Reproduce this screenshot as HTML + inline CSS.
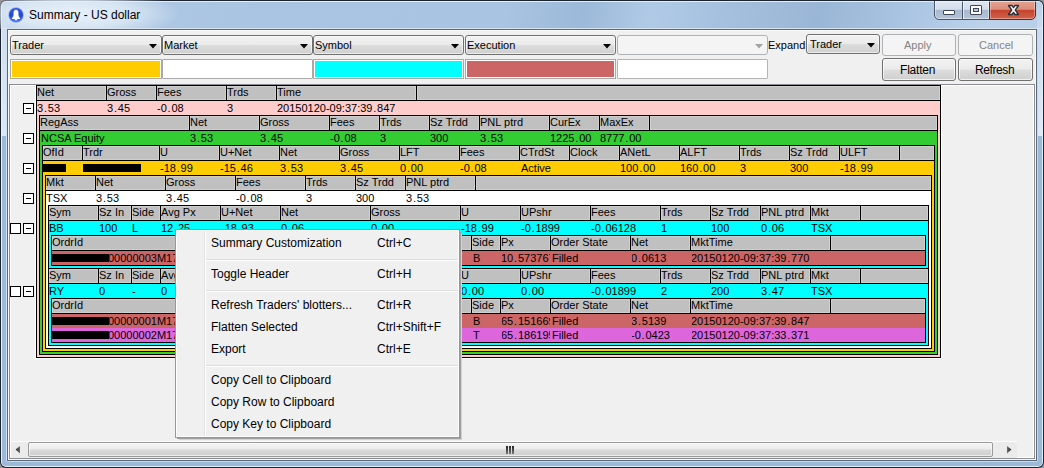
<!DOCTYPE html><html><head><meta charset="utf-8"><style>
html,body{margin:0;padding:0;}
body{width:1044px;height:468px;overflow:hidden;position:relative;background:#959595;font-family:"Liberation Sans",sans-serif;}
body>div,body>span,body>svg,div>span.t{position:absolute;box-sizing:border-box;}
span.p{margin:0 0.8px;}
.t{white-space:pre;line-height:normal;}
.t::before{content:"";}
</style></head><body>
<div style="left:0;top:0;width:1044px;height:468px;border-radius:6px;background:#1c2430;"></div>
<div style="left:1px;top:1px;width:1042px;height:466px;border-radius:5px;background:#e4eef8;"></div>
<div style="left:2px;top:2px;width:1040px;height:464px;border-radius:4px;background:linear-gradient(100deg,#b4cce6 0%,#aac5e2 20%,#a9c4e2 45%,#9cb9d9 52%,#b0cae6 58%,#a6c1df 64%,#9ab6d6 73%,#a8c3e1 80%,#bcd2ea 88%,#b2cae4 100%);"></div>
<div style="left:2px;top:136px;width:1040px;height:330px;border-radius:0 0 4px 4px;background:#9cb9d9;"></div>
<div style="left:0px;top:0px;width:200px;height:29px;background:radial-gradient(ellipse 110px 26px at 70px 14px,rgba(235,243,250,0.95) 0%,rgba(225,236,247,0.8) 55%,rgba(200,220,240,0) 100%);border-radius:6px 0 0 0;"></div>
<div style="left:2px;top:8px;width:5px;height:128px;background:linear-gradient(rgba(207,223,240,0) 0%,#cfdff0 15%,#dde9f5 100%);"></div>
<div style="left:1037px;top:8px;width:5px;height:128px;background:linear-gradient(rgba(200,218,240,0.3) 0%,#c8daf0 15%,#dde9f5 100%);"></div>
<div style="left:6px;top:29px;width:1px;height:432px;background:#d0e0f0;"></div>
<div style="left:1037px;top:29px;width:1px;height:432px;background:#c8daf0;"></div>
<div style="left:2px;top:28px;width:1040px;height:1px;background:#d8e4f0;"></div>
<div style="left:7px;top:461px;width:1030px;height:1px;background:#c8daf0;"></div>
<svg style="left:8px;top:7px" width="16" height="16" viewBox="0 0 16 16">
<defs><linearGradient id="ig" x1="0" y1="0" x2="0" y2="1"><stop offset="0" stop-color="#3a5ae0"/><stop offset="0.5" stop-color="#2446d8"/><stop offset="1" stop-color="#4f7af2"/></linearGradient></defs>
<circle cx="8" cy="8" r="7.7" fill="#8aa6f0"/>
<circle cx="8" cy="8" r="7.0" fill="url(#ig)"/>
<path d="M8 2.7 C6.3 2.7 5.5 4.1 5.5 5.8 L5.5 8.0 C5.5 9.5 4.7 10.3 4.0 10.9 L4.0 11.9 L12.0 11.9 L12.0 10.9 C11.3 10.3 10.5 9.5 10.5 8.0 L10.5 5.8 C10.5 4.1 9.7 2.7 8 2.7 Z" fill="#fff"/>
<ellipse cx="8" cy="12.4" rx="1.3" ry="0.9" fill="#fff"/>
</svg>
<span class="t" style="left:29px;top:8px;font-size:12px;color:#000;">Summary - US dollar</span>
<div style="left:934px;top:-3px;width:56px;height:23px;border:1px solid #4b5668;border-radius:0 0 0 5px;background:linear-gradient(#e2eaf4 0%,#d4deeb 54%,#a8b9cf 58%,#b4c4d8 100%);box-shadow:inset 0 0 0 1px rgba(255,255,255,0.45);"></div>
<div style="left:962px;top:0;width:1px;height:19px;background:#4b5668;"></div>
<div style="left:963px;top:1px;width:1px;height:18px;background:rgba(255,255,255,0.6);"></div>
<div style="left:989px;top:-3px;width:47px;height:23px;border:1px solid #4b3030;border-radius:0 0 5px 0;background:linear-gradient(#eaaa9a 0%,#da8c7a 54%,#c4432c 58%,#d0634c 100%);box-shadow:inset 0 0 0 1px rgba(255,255,255,0.35);"></div>
<div style="left:943px;top:10px;width:12px;height:5px;background:#fff;border:1px solid #3c4658;border-radius:1px;"></div>
<div style="left:970px;top:5px;width:12px;height:10px;background:#fff;border:1px solid #3c4658;border-radius:1px;"></div>
<div style="left:973px;top:8px;width:6px;height:4px;background:#b9cadf;border:1px solid #3c4658;"></div>
<div style="left:934px;top:0px;width:103px;height:1px;background:#1c2430;"></div>
<div style="left:935px;top:1px;width:101px;height:1px;background:rgba(255,255,255,0.55);"></div>
<svg style="left:1007px;top:4px" width="13" height="12" viewBox="0 0 13 12"><path d="M1.5 1.5 L5 1.5 L6.5 3.6 L8 1.5 L11.5 1.5 L8.3 6 L11.5 10.5 L8 10.5 L6.5 8.4 L5 10.5 L1.5 10.5 L4.7 6 Z" fill="#fafafa" stroke="#2a3038" stroke-width="1.3" stroke-linejoin="round"/></svg>
<div style="left:7px;top:29px;width:1030px;height:432px;background:#5a6878;"></div>
<div style="left:8px;top:30px;width:1028px;height:430px;background:#fafafa;"></div>
<div style="left:9px;top:31px;width:1026px;height:428px;background:#f0f0f0;"></div>
<div style="left:10px;top:35px;width:152px;height:20px;border:1px solid #707070;border-radius:3px;background:linear-gradient(#f2f2f2 0%,#ebebeb 48%,#dddddd 52%,#cfcfcf 100%);box-shadow:inset 0 0 0 1px rgba(255,255,255,0.6);"></div>
<span class="t" style="left:12px;top:39px;font-size:11px;color:#000;">Trader</span>
<svg style="left:149px;top:44px" width="8" height="5" viewBox="0 0 8 5"><path d="M0 0 L8 0 L4 4.5 Z" fill="#000"/></svg>
<div style="left:162px;top:35px;width:151px;height:20px;border:1px solid #707070;border-radius:3px;background:linear-gradient(#f2f2f2 0%,#ebebeb 48%,#dddddd 52%,#cfcfcf 100%);box-shadow:inset 0 0 0 1px rgba(255,255,255,0.6);"></div>
<span class="t" style="left:164px;top:39px;font-size:11px;color:#000;">Market</span>
<svg style="left:300px;top:44px" width="8" height="5" viewBox="0 0 8 5"><path d="M0 0 L8 0 L4 4.5 Z" fill="#000"/></svg>
<div style="left:313px;top:35px;width:151px;height:20px;border:1px solid #707070;border-radius:3px;background:linear-gradient(#f2f2f2 0%,#ebebeb 48%,#dddddd 52%,#cfcfcf 100%);box-shadow:inset 0 0 0 1px rgba(255,255,255,0.6);"></div>
<span class="t" style="left:315px;top:39px;font-size:11px;color:#000;">Symbol</span>
<svg style="left:451px;top:44px" width="8" height="5" viewBox="0 0 8 5"><path d="M0 0 L8 0 L4 4.5 Z" fill="#000"/></svg>
<div style="left:465px;top:35px;width:151px;height:20px;border:1px solid #707070;border-radius:3px;background:linear-gradient(#f2f2f2 0%,#ebebeb 48%,#dddddd 52%,#cfcfcf 100%);box-shadow:inset 0 0 0 1px rgba(255,255,255,0.6);"></div>
<span class="t" style="left:467px;top:39px;font-size:11px;color:#000;">Execution</span>
<svg style="left:603px;top:44px" width="8" height="5" viewBox="0 0 8 5"><path d="M0 0 L8 0 L4 4.5 Z" fill="#000"/></svg>
<div style="left:617px;top:35px;width:151px;height:20px;border:1px solid #adb2b5;border-radius:3px;background:#f4f4f4;"></div>
<svg style="left:755px;top:44px" width="8" height="5" viewBox="0 0 8 5"><path d="M0 0 L8 0 L4 4.5 Z" fill="#a3a3a3"/></svg>
<span class="t" style="left:768px;top:39px;font-size:11px;color:#000;">Expand</span>
<div style="left:806px;top:34px;width:74px;height:20px;border:1px solid #707070;border-radius:3px;background:linear-gradient(#f2f2f2 0%,#ebebeb 48%,#dddddd 52%,#cfcfcf 100%);box-shadow:inset 0 0 0 1px rgba(255,255,255,0.6);"></div>
<span class="t" style="left:810px;top:38px;font-size:11px;color:#000;">Trader</span>
<svg style="left:867px;top:43px" width="8" height="5" viewBox="0 0 8 5"><path d="M0 0 L8 0 L4 4.5 Z" fill="#000"/></svg>
<div style="left:10px;top:59px;width:152px;height:20px;background:#ffcc00;"></div>
<div style="left:10px;top:59px;width:152px;height:20px;border:1px solid #a9a9a9;border-radius:1px;"></div>
<div style="left:11px;top:60px;width:150px;height:18px;border:1px solid #ffffff;"></div>
<div style="left:162px;top:59px;width:151px;height:20px;background:#ffffff;"></div>
<div style="left:162px;top:59px;width:151px;height:20px;border:1px solid #a9a9a9;border-radius:1px;"></div>
<div style="left:163px;top:60px;width:149px;height:18px;border:1px solid #ffffff;"></div>
<div style="left:313px;top:59px;width:151px;height:20px;background:#00ffff;"></div>
<div style="left:313px;top:59px;width:151px;height:20px;border:1px solid #a9a9a9;border-radius:1px;"></div>
<div style="left:314px;top:60px;width:149px;height:18px;border:1px solid #ffffff;"></div>
<div style="left:465px;top:59px;width:151px;height:20px;background:#cc6666;"></div>
<div style="left:465px;top:59px;width:151px;height:20px;border:1px solid #a9a9a9;border-radius:1px;"></div>
<div style="left:466px;top:60px;width:149px;height:18px;border:1px solid #ffffff;"></div>
<div style="left:617px;top:59px;width:151px;height:20px;background:#ffffff;"></div>
<div style="left:617px;top:59px;width:151px;height:20px;border:1px solid #b4b4b4;border-radius:1px;"></div>
<div style="left:618px;top:60px;width:149px;height:18px;border:1px solid #ffffff;"></div>
<div style="left:882px;top:34px;width:74px;height:22px;border:1px solid #adb2b5;border-radius:3px;background:#f4f4f4;"></div>
<span class="t" style="left:904px;top:39px;font-size:11px;color:#838383;letter-spacing:0px;">Apply</span>
<div style="left:958px;top:34px;width:75px;height:22px;border:1px solid #adb2b5;border-radius:3px;background:#f4f4f4;"></div>
<span class="t" style="left:979px;top:39px;font-size:11px;color:#838383;letter-spacing:0px;">Cancel</span>
<div style="left:882px;top:58px;width:74px;height:23px;border:1px solid #707070;border-radius:3px;background:linear-gradient(#f2f2f2 0%,#ebebeb 48%,#dddddd 52%,#cfcfcf 100%);box-shadow:inset 0 0 0 1px rgba(255,255,255,0.7);"></div>
<span class="t" style="left:900px;top:63px;font-size:12px;color:#000;letter-spacing:-0.2px;">Flatten</span>
<div style="left:958px;top:58px;width:75px;height:23px;border:1px solid #707070;border-radius:3px;background:linear-gradient(#f2f2f2 0%,#ebebeb 48%,#dddddd 52%,#cfcfcf 100%);box-shadow:inset 0 0 0 1px rgba(255,255,255,0.7);"></div>
<span class="t" style="left:975px;top:63px;font-size:12px;color:#000;letter-spacing:-0.4px;">Refresh</span>
<div style="left:9px;top:84px;width:1026px;height:375px;background:#8a8d94;"></div>
<div style="left:10px;top:85px;width:1024px;height:373px;background:#ffffff;"></div>
<div style="left:11px;top:86px;width:1022px;height:371px;background:#f0f0f0;"></div>
<div style="left:35px;top:85px;width:1px;height:274px;background:#ffffff;"></div>
<div style="left:941px;top:85px;width:1px;height:274px;background:#ffffff;"></div>
<div style="left:35px;top:358px;width:907px;height:1px;background:#ffffff;"></div>
<div style="left:36px;top:85px;width:905px;height:273px;background:#000;"></div>
<div style="left:37px;top:86px;width:903px;height:271px;background:#ffcccc;"></div>
<div style="left:37px;top:86px;width:903px;height:14px;background:#000;"></div>
<div style="left:37px;top:100px;width:903px;height:1px;background:#000;"></div>
<div style="left:37px;top:86px;width:69px;height:14px;background:#c0c0c0;border:1px solid #cfcfcf;"></div>
<div style="left:107px;top:86px;width:49px;height:14px;background:#c0c0c0;border:1px solid #cfcfcf;"></div>
<div style="left:157px;top:86px;width:69px;height:14px;background:#c0c0c0;border:1px solid #cfcfcf;"></div>
<div style="left:227px;top:86px;width:49px;height:14px;background:#c0c0c0;border:1px solid #cfcfcf;"></div>
<div style="left:277px;top:86px;width:139px;height:14px;background:#c0c0c0;border:1px solid #cfcfcf;"></div>
<div style="left:417px;top:86px;width:523px;height:14px;background:#c0c0c0;border:1px solid #cfcfcf;"></div>
<span class="t" style="left:37px;top:86px;font-size:11px;color:#000;">Net</span>
<span class="t" style="left:107px;top:86px;font-size:11px;color:#000;">Gross</span>
<span class="t" style="left:157px;top:86px;font-size:11px;color:#000;">Fees</span>
<span class="t" style="left:227px;top:86px;font-size:11px;color:#000;">Trds</span>
<span class="t" style="left:277px;top:86px;font-size:11px;color:#000;">Time</span>
<span class="t" style="left:37px;top:102px;font-size:11px;color:#000;">3<span class="p">.</span>53</span>
<span class="t" style="left:107px;top:102px;font-size:11px;color:#000;">3<span class="p">.</span>45</span>
<span class="t" style="left:157px;top:102px;font-size:11px;color:#000;">-0<span class="p">.</span>08</span>
<span class="t" style="left:227px;top:102px;font-size:11px;color:#000;">3</span>
<span class="t" style="left:277px;top:102px;font-size:11px;color:#000;">20150120-09:37:39<span class="p">.</span>847</span>
<div style="left:39px;top:115px;width:899px;height:240px;background:#000;"></div>
<div style="left:40px;top:116px;width:897px;height:238px;background:#33cc33;"></div>
<div style="left:40px;top:116px;width:897px;height:14px;background:#000;"></div>
<div style="left:40px;top:130px;width:897px;height:1px;background:#000;"></div>
<div style="left:40px;top:116px;width:149px;height:14px;background:#c0c0c0;border:1px solid #cfcfcf;"></div>
<div style="left:190px;top:116px;width:69px;height:14px;background:#c0c0c0;border:1px solid #cfcfcf;"></div>
<div style="left:260px;top:116px;width:69px;height:14px;background:#c0c0c0;border:1px solid #cfcfcf;"></div>
<div style="left:330px;top:116px;width:49px;height:14px;background:#c0c0c0;border:1px solid #cfcfcf;"></div>
<div style="left:380px;top:116px;width:49px;height:14px;background:#c0c0c0;border:1px solid #cfcfcf;"></div>
<div style="left:430px;top:116px;width:49px;height:14px;background:#c0c0c0;border:1px solid #cfcfcf;"></div>
<div style="left:480px;top:116px;width:69px;height:14px;background:#c0c0c0;border:1px solid #cfcfcf;"></div>
<div style="left:550px;top:116px;width:49px;height:14px;background:#c0c0c0;border:1px solid #cfcfcf;"></div>
<div style="left:600px;top:116px;width:49px;height:14px;background:#c0c0c0;border:1px solid #cfcfcf;"></div>
<div style="left:650px;top:116px;width:287px;height:14px;background:#c0c0c0;border:1px solid #cfcfcf;"></div>
<span class="t" style="left:40px;top:116px;font-size:11px;color:#000;">RegAss</span>
<span class="t" style="left:190px;top:116px;font-size:11px;color:#000;">Net</span>
<span class="t" style="left:260px;top:116px;font-size:11px;color:#000;">Gross</span>
<span class="t" style="left:330px;top:116px;font-size:11px;color:#000;">Fees</span>
<span class="t" style="left:380px;top:116px;font-size:11px;color:#000;">Trds</span>
<span class="t" style="left:430px;top:116px;font-size:11px;color:#000;">Sz Trdd</span>
<span class="t" style="left:480px;top:116px;font-size:11px;color:#000;">PNL ptrd</span>
<span class="t" style="left:550px;top:116px;font-size:11px;color:#000;">CurEx</span>
<span class="t" style="left:600px;top:116px;font-size:11px;color:#000;">MaxEx</span>
<span class="t" style="left:41px;top:132px;font-size:11px;color:#000;">NCSA Equity</span>
<span class="t" style="left:190px;top:132px;font-size:11px;color:#000;">3<span class="p">.</span>53</span>
<span class="t" style="left:260px;top:132px;font-size:11px;color:#000;">3<span class="p">.</span>45</span>
<span class="t" style="left:330px;top:132px;font-size:11px;color:#000;">-0<span class="p">.</span>08</span>
<span class="t" style="left:380px;top:132px;font-size:11px;color:#000;">3</span>
<span class="t" style="left:430px;top:132px;font-size:11px;color:#000;">300</span>
<span class="t" style="left:480px;top:132px;font-size:11px;color:#000;">3<span class="p">.</span>53</span>
<span class="t" style="left:550px;top:132px;font-size:11px;color:#000;">1225<span class="p">.</span>00</span>
<span class="t" style="left:600px;top:132px;font-size:11px;color:#000;">8777<span class="p">.</span>00</span>
<div style="left:42px;top:145px;width:893px;height:207px;background:#000;"></div>
<div style="left:43px;top:146px;width:891px;height:205px;background:#ffcc00;"></div>
<div style="left:43px;top:146px;width:891px;height:14px;background:#000;"></div>
<div style="left:43px;top:160px;width:891px;height:1px;background:#000;"></div>
<div style="left:43px;top:146px;width:39px;height:14px;background:#c0c0c0;border:1px solid #cfcfcf;"></div>
<div style="left:83px;top:146px;width:76px;height:14px;background:#c0c0c0;border:1px solid #cfcfcf;"></div>
<div style="left:160px;top:146px;width:59px;height:14px;background:#c0c0c0;border:1px solid #cfcfcf;"></div>
<div style="left:220px;top:146px;width:59px;height:14px;background:#c0c0c0;border:1px solid #cfcfcf;"></div>
<div style="left:280px;top:146px;width:59px;height:14px;background:#c0c0c0;border:1px solid #cfcfcf;"></div>
<div style="left:340px;top:146px;width:59px;height:14px;background:#c0c0c0;border:1px solid #cfcfcf;"></div>
<div style="left:400px;top:146px;width:59px;height:14px;background:#c0c0c0;border:1px solid #cfcfcf;"></div>
<div style="left:460px;top:146px;width:59px;height:14px;background:#c0c0c0;border:1px solid #cfcfcf;"></div>
<div style="left:520px;top:146px;width:49px;height:14px;background:#c0c0c0;border:1px solid #cfcfcf;"></div>
<div style="left:570px;top:146px;width:49px;height:14px;background:#c0c0c0;border:1px solid #cfcfcf;"></div>
<div style="left:620px;top:146px;width:59px;height:14px;background:#c0c0c0;border:1px solid #cfcfcf;"></div>
<div style="left:680px;top:146px;width:59px;height:14px;background:#c0c0c0;border:1px solid #cfcfcf;"></div>
<div style="left:740px;top:146px;width:49px;height:14px;background:#c0c0c0;border:1px solid #cfcfcf;"></div>
<div style="left:790px;top:146px;width:49px;height:14px;background:#c0c0c0;border:1px solid #cfcfcf;"></div>
<div style="left:840px;top:146px;width:59px;height:14px;background:#c0c0c0;border:1px solid #cfcfcf;"></div>
<div style="left:900px;top:146px;width:34px;height:14px;background:#c0c0c0;border:1px solid #cfcfcf;"></div>
<span class="t" style="left:43px;top:146px;font-size:11px;color:#000;">OfId</span>
<span class="t" style="left:83px;top:146px;font-size:11px;color:#000;">Trdr</span>
<span class="t" style="left:160px;top:146px;font-size:11px;color:#000;">U</span>
<span class="t" style="left:220px;top:146px;font-size:11px;color:#000;">U+Net</span>
<span class="t" style="left:280px;top:146px;font-size:11px;color:#000;">Net</span>
<span class="t" style="left:340px;top:146px;font-size:11px;color:#000;">Gross</span>
<span class="t" style="left:400px;top:146px;font-size:11px;color:#000;">LFT</span>
<span class="t" style="left:460px;top:146px;font-size:11px;color:#000;">Fees</span>
<span class="t" style="left:520px;top:146px;font-size:11px;color:#000;">CTrdSt</span>
<span class="t" style="left:570px;top:146px;font-size:11px;color:#000;">Clock</span>
<span class="t" style="left:620px;top:146px;font-size:11px;color:#000;">ANetL</span>
<span class="t" style="left:680px;top:146px;font-size:11px;color:#000;">ALFT</span>
<span class="t" style="left:740px;top:146px;font-size:11px;color:#000;">Trds</span>
<span class="t" style="left:790px;top:146px;font-size:11px;color:#000;">Sz Trdd</span>
<span class="t" style="left:840px;top:146px;font-size:11px;color:#000;">ULFT</span>
<div style="left:43px;top:164px;width:23px;height:8px;background:#000;"></div>
<div style="left:83px;top:164px;width:58px;height:8px;background:#000;"></div>
<span class="t" style="left:160px;top:162px;font-size:11px;color:#000;">-18<span class="p">.</span>99</span>
<span class="t" style="left:220px;top:162px;font-size:11px;color:#000;">-15<span class="p">.</span>46</span>
<span class="t" style="left:280px;top:162px;font-size:11px;color:#000;">3<span class="p">.</span>53</span>
<span class="t" style="left:340px;top:162px;font-size:11px;color:#000;">3<span class="p">.</span>45</span>
<span class="t" style="left:400px;top:162px;font-size:11px;color:#000;">0<span class="p">.</span>00</span>
<span class="t" style="left:460px;top:162px;font-size:11px;color:#000;">-0<span class="p">.</span>08</span>
<span class="t" style="left:521px;top:162px;font-size:11px;color:#000;">Active</span>
<span class="t" style="left:620px;top:162px;font-size:11px;color:#000;">100<span class="p">.</span>00</span>
<span class="t" style="left:680px;top:162px;font-size:11px;color:#000;">160<span class="p">.</span>00</span>
<span class="t" style="left:740px;top:162px;font-size:11px;color:#000;">3</span>
<span class="t" style="left:790px;top:162px;font-size:11px;color:#000;">300</span>
<span class="t" style="left:840px;top:162px;font-size:11px;color:#000;">-18<span class="p">.</span>99</span>
<div style="left:45px;top:175px;width:887px;height:174px;background:#000;"></div>
<div style="left:46px;top:176px;width:885px;height:172px;background:#ffffff;"></div>
<div style="left:46px;top:176px;width:885px;height:14px;background:#000;"></div>
<div style="left:46px;top:190px;width:885px;height:1px;background:#000;"></div>
<div style="left:46px;top:176px;width:49px;height:14px;background:#c0c0c0;border:1px solid #cfcfcf;"></div>
<div style="left:96px;top:176px;width:69px;height:14px;background:#c0c0c0;border:1px solid #cfcfcf;"></div>
<div style="left:166px;top:176px;width:69px;height:14px;background:#c0c0c0;border:1px solid #cfcfcf;"></div>
<div style="left:236px;top:176px;width:69px;height:14px;background:#c0c0c0;border:1px solid #cfcfcf;"></div>
<div style="left:306px;top:176px;width:49px;height:14px;background:#c0c0c0;border:1px solid #cfcfcf;"></div>
<div style="left:356px;top:176px;width:49px;height:14px;background:#c0c0c0;border:1px solid #cfcfcf;"></div>
<div style="left:406px;top:176px;width:69px;height:14px;background:#c0c0c0;border:1px solid #cfcfcf;"></div>
<div style="left:476px;top:176px;width:455px;height:14px;background:#c0c0c0;border:1px solid #cfcfcf;"></div>
<span class="t" style="left:46px;top:176px;font-size:11px;color:#000;">Mkt</span>
<span class="t" style="left:96px;top:176px;font-size:11px;color:#000;">Net</span>
<span class="t" style="left:166px;top:176px;font-size:11px;color:#000;">Gross</span>
<span class="t" style="left:236px;top:176px;font-size:11px;color:#000;">Fees</span>
<span class="t" style="left:306px;top:176px;font-size:11px;color:#000;">Trds</span>
<span class="t" style="left:356px;top:176px;font-size:11px;color:#000;">Sz Trdd</span>
<span class="t" style="left:406px;top:176px;font-size:11px;color:#000;">PNL ptrd</span>
<span class="t" style="left:46px;top:192px;font-size:11px;color:#000;">TSX</span>
<span class="t" style="left:96px;top:192px;font-size:11px;color:#000;">3<span class="p">.</span>53</span>
<span class="t" style="left:166px;top:192px;font-size:11px;color:#000;">3<span class="p">.</span>45</span>
<span class="t" style="left:236px;top:192px;font-size:11px;color:#000;">-0<span class="p">.</span>08</span>
<span class="t" style="left:306px;top:192px;font-size:11px;color:#000;">3</span>
<span class="t" style="left:356px;top:192px;font-size:11px;color:#000;">300</span>
<span class="t" style="left:406px;top:192px;font-size:11px;color:#000;">3<span class="p">.</span>53</span>
<div style="left:48px;top:205px;width:881px;height:141px;background:#000;"></div>
<div style="left:49px;top:206px;width:879px;height:139px;background:#00ffff;"></div>
<div style="left:49px;top:206px;width:879px;height:14px;background:#000;"></div>
<div style="left:49px;top:220px;width:879px;height:1px;background:#000;"></div>
<div style="left:49px;top:206px;width:49px;height:14px;background:#c0c0c0;border:1px solid #cfcfcf;"></div>
<div style="left:99px;top:206px;width:32px;height:14px;background:#c0c0c0;border:1px solid #cfcfcf;"></div>
<div style="left:132px;top:206px;width:28px;height:14px;background:#c0c0c0;border:1px solid #cfcfcf;"></div>
<div style="left:161px;top:206px;width:59px;height:14px;background:#c0c0c0;border:1px solid #cfcfcf;"></div>
<div style="left:221px;top:206px;width:59px;height:14px;background:#c0c0c0;border:1px solid #cfcfcf;"></div>
<div style="left:281px;top:206px;width:89px;height:14px;background:#c0c0c0;border:1px solid #cfcfcf;"></div>
<div style="left:371px;top:206px;width:89px;height:14px;background:#c0c0c0;border:1px solid #cfcfcf;"></div>
<div style="left:461px;top:206px;width:59px;height:14px;background:#c0c0c0;border:1px solid #cfcfcf;"></div>
<div style="left:521px;top:206px;width:69px;height:14px;background:#c0c0c0;border:1px solid #cfcfcf;"></div>
<div style="left:591px;top:206px;width:69px;height:14px;background:#c0c0c0;border:1px solid #cfcfcf;"></div>
<div style="left:661px;top:206px;width:49px;height:14px;background:#c0c0c0;border:1px solid #cfcfcf;"></div>
<div style="left:711px;top:206px;width:49px;height:14px;background:#c0c0c0;border:1px solid #cfcfcf;"></div>
<div style="left:761px;top:206px;width:49px;height:14px;background:#c0c0c0;border:1px solid #cfcfcf;"></div>
<div style="left:811px;top:206px;width:49px;height:14px;background:#c0c0c0;border:1px solid #cfcfcf;"></div>
<div style="left:861px;top:206px;width:67px;height:14px;background:#c0c0c0;border:1px solid #cfcfcf;"></div>
<span class="t" style="left:49px;top:206px;font-size:11px;color:#000;">Sym</span>
<span class="t" style="left:99px;top:206px;font-size:11px;color:#000;">Sz In</span>
<span class="t" style="left:132px;top:206px;font-size:11px;color:#000;">Side</span>
<span class="t" style="left:161px;top:206px;font-size:11px;color:#000;">Avg Px</span>
<span class="t" style="left:221px;top:206px;font-size:11px;color:#000;">U+Net</span>
<span class="t" style="left:281px;top:206px;font-size:11px;color:#000;">Net</span>
<span class="t" style="left:371px;top:206px;font-size:11px;color:#000;">Gross</span>
<span class="t" style="left:461px;top:206px;font-size:11px;color:#000;">U</span>
<span class="t" style="left:521px;top:206px;font-size:11px;color:#000;">UPshr</span>
<span class="t" style="left:591px;top:206px;font-size:11px;color:#000;">Fees</span>
<span class="t" style="left:661px;top:206px;font-size:11px;color:#000;">Trds</span>
<span class="t" style="left:711px;top:206px;font-size:11px;color:#000;">Sz Trdd</span>
<span class="t" style="left:761px;top:206px;font-size:11px;color:#000;">PNL ptrd</span>
<span class="t" style="left:811px;top:206px;font-size:11px;color:#000;">Mkt</span>
<span class="t" style="left:49px;top:222px;font-size:11px;color:#000;">BB</span>
<span class="t" style="left:99px;top:222px;font-size:11px;color:#000;">100</span>
<span class="t" style="left:132px;top:222px;font-size:11px;color:#000;">L</span>
<span class="t" style="left:161px;top:222px;font-size:11px;color:#000;">12<span class="p">.</span>25</span>
<span class="t" style="left:221px;top:222px;font-size:11px;color:#000;">-18<span class="p">.</span>93</span>
<span class="t" style="left:281px;top:222px;font-size:11px;color:#000;">0<span class="p">.</span>06</span>
<span class="t" style="left:371px;top:222px;font-size:11px;color:#000;">0<span class="p">.</span>00</span>
<span class="t" style="left:461px;top:222px;font-size:11px;color:#000;">-18<span class="p">.</span>99</span>
<span class="t" style="left:521px;top:222px;font-size:11px;color:#000;">-0<span class="p">.</span>1899</span>
<span class="t" style="left:591px;top:222px;font-size:11px;color:#000;">-0<span class="p">.</span>06128</span>
<span class="t" style="left:661px;top:222px;font-size:11px;color:#000;">1</span>
<span class="t" style="left:711px;top:222px;font-size:11px;color:#000;">100</span>
<span class="t" style="left:761px;top:222px;font-size:11px;color:#000;">0<span class="p">.</span>06</span>
<span class="t" style="left:811px;top:222px;font-size:11px;color:#000;">TSX</span>
<div style="left:49px;top:268px;width:879px;height:1px;background:#000;"></div>
<div style="left:49px;top:269px;width:879px;height:14px;background:#000;"></div>
<div style="left:49px;top:283px;width:879px;height:1px;background:#000;"></div>
<div style="left:49px;top:269px;width:49px;height:14px;background:#c0c0c0;border:1px solid #cfcfcf;"></div>
<div style="left:99px;top:269px;width:32px;height:14px;background:#c0c0c0;border:1px solid #cfcfcf;"></div>
<div style="left:132px;top:269px;width:28px;height:14px;background:#c0c0c0;border:1px solid #cfcfcf;"></div>
<div style="left:161px;top:269px;width:59px;height:14px;background:#c0c0c0;border:1px solid #cfcfcf;"></div>
<div style="left:221px;top:269px;width:59px;height:14px;background:#c0c0c0;border:1px solid #cfcfcf;"></div>
<div style="left:281px;top:269px;width:89px;height:14px;background:#c0c0c0;border:1px solid #cfcfcf;"></div>
<div style="left:371px;top:269px;width:89px;height:14px;background:#c0c0c0;border:1px solid #cfcfcf;"></div>
<div style="left:461px;top:269px;width:59px;height:14px;background:#c0c0c0;border:1px solid #cfcfcf;"></div>
<div style="left:521px;top:269px;width:69px;height:14px;background:#c0c0c0;border:1px solid #cfcfcf;"></div>
<div style="left:591px;top:269px;width:69px;height:14px;background:#c0c0c0;border:1px solid #cfcfcf;"></div>
<div style="left:661px;top:269px;width:49px;height:14px;background:#c0c0c0;border:1px solid #cfcfcf;"></div>
<div style="left:711px;top:269px;width:49px;height:14px;background:#c0c0c0;border:1px solid #cfcfcf;"></div>
<div style="left:761px;top:269px;width:49px;height:14px;background:#c0c0c0;border:1px solid #cfcfcf;"></div>
<div style="left:811px;top:269px;width:49px;height:14px;background:#c0c0c0;border:1px solid #cfcfcf;"></div>
<div style="left:861px;top:269px;width:67px;height:14px;background:#c0c0c0;border:1px solid #cfcfcf;"></div>
<span class="t" style="left:49px;top:269px;font-size:11px;color:#000;">Sym</span>
<span class="t" style="left:99px;top:269px;font-size:11px;color:#000;">Sz In</span>
<span class="t" style="left:132px;top:269px;font-size:11px;color:#000;">Side</span>
<span class="t" style="left:161px;top:269px;font-size:11px;color:#000;">Avg Px</span>
<span class="t" style="left:221px;top:269px;font-size:11px;color:#000;">U+Net</span>
<span class="t" style="left:281px;top:269px;font-size:11px;color:#000;">Net</span>
<span class="t" style="left:371px;top:269px;font-size:11px;color:#000;">Gross</span>
<span class="t" style="left:461px;top:269px;font-size:11px;color:#000;">U</span>
<span class="t" style="left:521px;top:269px;font-size:11px;color:#000;">UPshr</span>
<span class="t" style="left:591px;top:269px;font-size:11px;color:#000;">Fees</span>
<span class="t" style="left:661px;top:269px;font-size:11px;color:#000;">Trds</span>
<span class="t" style="left:711px;top:269px;font-size:11px;color:#000;">Sz Trdd</span>
<span class="t" style="left:761px;top:269px;font-size:11px;color:#000;">PNL ptrd</span>
<span class="t" style="left:811px;top:269px;font-size:11px;color:#000;">Mkt</span>
<span class="t" style="left:49px;top:285px;font-size:11px;color:#000;">RY</span>
<span class="t" style="left:99px;top:285px;font-size:11px;color:#000;">0</span>
<span class="t" style="left:132px;top:285px;font-size:11px;color:#000;">-</span>
<span class="t" style="left:161px;top:285px;font-size:11px;color:#000;">0</span>
<span class="t" style="left:221px;top:285px;font-size:11px;color:#000;">0<span class="p">.</span>00</span>
<span class="t" style="left:281px;top:285px;font-size:11px;color:#000;">0<span class="p">.</span>00</span>
<span class="t" style="left:371px;top:285px;font-size:11px;color:#000;">0<span class="p">.</span>00</span>
<span class="t" style="left:461px;top:285px;font-size:11px;color:#000;">0<span class="p">.</span>00</span>
<span class="t" style="left:521px;top:285px;font-size:11px;color:#000;">0<span class="p">.</span>00</span>
<span class="t" style="left:591px;top:285px;font-size:11px;color:#000;">-0<span class="p">.</span>01899</span>
<span class="t" style="left:661px;top:285px;font-size:11px;color:#000;">2</span>
<span class="t" style="left:711px;top:285px;font-size:11px;color:#000;">200</span>
<span class="t" style="left:761px;top:285px;font-size:11px;color:#000;">3<span class="p">.</span>47</span>
<span class="t" style="left:811px;top:285px;font-size:11px;color:#000;">TSX</span>
<div style="left:51px;top:235px;width:875px;height:31px;background:#000;"></div>
<div style="left:52px;top:236px;width:873px;height:29px;background:#cc6666;"></div>
<div style="left:52px;top:236px;width:873px;height:14px;background:#000;"></div>
<div style="left:52px;top:250px;width:873px;height:1px;background:#000;"></div>
<div style="left:52px;top:236px;width:419px;height:14px;background:#c0c0c0;border:1px solid #cfcfcf;"></div>
<div style="left:472px;top:236px;width:28px;height:14px;background:#c0c0c0;border:1px solid #cfcfcf;"></div>
<div style="left:501px;top:236px;width:49px;height:14px;background:#c0c0c0;border:1px solid #cfcfcf;"></div>
<div style="left:551px;top:236px;width:79px;height:14px;background:#c0c0c0;border:1px solid #cfcfcf;"></div>
<div style="left:631px;top:236px;width:59px;height:14px;background:#c0c0c0;border:1px solid #cfcfcf;"></div>
<div style="left:691px;top:236px;width:139px;height:14px;background:#c0c0c0;border:1px solid #cfcfcf;"></div>
<div style="left:831px;top:236px;width:94px;height:14px;background:#c0c0c0;border:1px solid #cfcfcf;"></div>
<span class="t" style="left:52px;top:236px;font-size:11px;color:#000;">OrdrId</span>
<span class="t" style="left:472px;top:236px;font-size:11px;color:#000;">Side</span>
<span class="t" style="left:501px;top:236px;font-size:11px;color:#000;">Px</span>
<span class="t" style="left:551px;top:236px;font-size:11px;color:#000;">Order State</span>
<span class="t" style="left:631px;top:236px;font-size:11px;color:#000;">Net</span>
<span class="t" style="left:691px;top:236px;font-size:11px;color:#000;">MktTime</span>
<div style="left:52px;top:254px;width:57px;height:8px;background:#000;"></div>
<div style="left:109px;top:251px;width:362px;height:14px;overflow:hidden;"><span class="t" style="left:-1px;top:1px;font-size:11px;color:#000;">00000003M1757</span></div>
<div style="left:473px;top:251px;width:27px;height:14px;overflow:hidden;"><span class="t" style="left:0px;top:1px;font-size:11px;color:#000;">B</span></div>
<div style="left:502px;top:251px;width:48px;height:14px;overflow:hidden;"><span class="t" style="left:-1px;top:1px;font-size:11px;color:#000;">10<span class="p">.</span>573767</span></div>
<div style="left:552px;top:251px;width:78px;height:14px;overflow:hidden;"><span class="t" style="left:0px;top:1px;font-size:11px;color:#000;">Filled</span></div>
<div style="left:632px;top:251px;width:58px;height:14px;overflow:hidden;"><span class="t" style="left:-1px;top:1px;font-size:11px;color:#000;">0<span class="p">.</span>0613</span></div>
<div style="left:692px;top:251px;width:138px;height:14px;overflow:hidden;"><span class="t" style="left:-1px;top:1px;font-size:11px;color:#000;">20150120-09:37:39<span class="p">.</span>770</span></div>
<div style="left:51px;top:298px;width:875px;height:45px;background:#000;"></div>
<div style="left:52px;top:299px;width:873px;height:43px;background:#cc6666;"></div>
<div style="left:52px;top:299px;width:873px;height:14px;background:#000;"></div>
<div style="left:52px;top:313px;width:873px;height:1px;background:#000;"></div>
<div style="left:52px;top:299px;width:419px;height:14px;background:#c0c0c0;border:1px solid #cfcfcf;"></div>
<div style="left:472px;top:299px;width:28px;height:14px;background:#c0c0c0;border:1px solid #cfcfcf;"></div>
<div style="left:501px;top:299px;width:49px;height:14px;background:#c0c0c0;border:1px solid #cfcfcf;"></div>
<div style="left:551px;top:299px;width:79px;height:14px;background:#c0c0c0;border:1px solid #cfcfcf;"></div>
<div style="left:631px;top:299px;width:59px;height:14px;background:#c0c0c0;border:1px solid #cfcfcf;"></div>
<div style="left:691px;top:299px;width:139px;height:14px;background:#c0c0c0;border:1px solid #cfcfcf;"></div>
<div style="left:831px;top:299px;width:94px;height:14px;background:#c0c0c0;border:1px solid #cfcfcf;"></div>
<span class="t" style="left:52px;top:299px;font-size:11px;color:#000;">OrdrId</span>
<span class="t" style="left:472px;top:299px;font-size:11px;color:#000;">Side</span>
<span class="t" style="left:501px;top:299px;font-size:11px;color:#000;">Px</span>
<span class="t" style="left:551px;top:299px;font-size:11px;color:#000;">Order State</span>
<span class="t" style="left:631px;top:299px;font-size:11px;color:#000;">Net</span>
<span class="t" style="left:691px;top:299px;font-size:11px;color:#000;">MktTime</span>
<div style="left:52px;top:328px;width:873px;height:14px;background:#dd66dd;"></div>
<div style="left:52px;top:317px;width:57px;height:8px;background:#000;"></div>
<div style="left:52px;top:331px;width:57px;height:8px;background:#000;"></div>
<div style="left:109px;top:314px;width:362px;height:14px;overflow:hidden;"><span class="t" style="left:-1px;top:1px;font-size:11px;color:#000;">00000001M1757</span></div>
<div style="left:473px;top:314px;width:27px;height:14px;overflow:hidden;"><span class="t" style="left:0px;top:1px;font-size:11px;color:#000;">B</span></div>
<div style="left:502px;top:314px;width:48px;height:14px;overflow:hidden;"><span class="t" style="left:-1px;top:1px;font-size:11px;color:#000;">65<span class="p">.</span>151669</span></div>
<div style="left:552px;top:314px;width:78px;height:14px;overflow:hidden;"><span class="t" style="left:0px;top:1px;font-size:11px;color:#000;">Filled</span></div>
<div style="left:632px;top:314px;width:58px;height:14px;overflow:hidden;"><span class="t" style="left:-1px;top:1px;font-size:11px;color:#000;">3<span class="p">.</span>5139</span></div>
<div style="left:692px;top:314px;width:138px;height:14px;overflow:hidden;"><span class="t" style="left:-1px;top:1px;font-size:11px;color:#000;">20150120-09:37:39<span class="p">.</span>847</span></div>
<div style="left:109px;top:328px;width:362px;height:14px;overflow:hidden;"><span class="t" style="left:-1px;top:1px;font-size:11px;color:#000;">00000002M1757</span></div>
<div style="left:473px;top:328px;width:27px;height:14px;overflow:hidden;"><span class="t" style="left:0px;top:1px;font-size:11px;color:#000;">T</span></div>
<div style="left:502px;top:328px;width:48px;height:14px;overflow:hidden;"><span class="t" style="left:-1px;top:1px;font-size:11px;color:#000;">65<span class="p">.</span>186195</span></div>
<div style="left:552px;top:328px;width:78px;height:14px;overflow:hidden;"><span class="t" style="left:0px;top:1px;font-size:11px;color:#000;">Filled</span></div>
<div style="left:632px;top:328px;width:58px;height:14px;overflow:hidden;"><span class="t" style="left:-1px;top:1px;font-size:11px;color:#000;">-0<span class="p">.</span>0423</span></div>
<div style="left:692px;top:328px;width:138px;height:14px;overflow:hidden;"><span class="t" style="left:-1px;top:1px;font-size:11px;color:#000;">20150120-09:37:33<span class="p">.</span>371</span></div>
<div style="left:23px;top:103px;width:11px;height:11px;border:1px solid #000;background:#fff;"></div>
<div style="left:26px;top:108px;width:5px;height:1px;background:#000;"></div>
<div style="left:23px;top:133px;width:11px;height:11px;border:1px solid #000;background:#fff;"></div>
<div style="left:26px;top:138px;width:5px;height:1px;background:#000;"></div>
<div style="left:23px;top:163px;width:11px;height:11px;border:1px solid #000;background:#fff;"></div>
<div style="left:26px;top:168px;width:5px;height:1px;background:#000;"></div>
<div style="left:23px;top:193px;width:11px;height:11px;border:1px solid #000;background:#fff;"></div>
<div style="left:26px;top:198px;width:5px;height:1px;background:#000;"></div>
<div style="left:10px;top:223px;width:11px;height:11px;border:1px solid #000;background:#fff;"></div>
<div style="left:23px;top:223px;width:11px;height:11px;border:1px solid #000;background:#fff;"></div>
<div style="left:26px;top:228px;width:5px;height:1px;background:#000;"></div>
<div style="left:10px;top:286px;width:11px;height:11px;border:1px solid #000;background:#fff;"></div>
<div style="left:23px;top:286px;width:11px;height:11px;border:1px solid #000;background:#fff;"></div>
<div style="left:26px;top:291px;width:5px;height:1px;background:#000;"></div>
<div style="left:11px;top:441px;width:1006px;height:1px;background:#fbfbfb;"></div>
<div style="left:11px;top:442px;width:1006px;height:16px;background:#ebebeb;"></div>
<svg style="left:15px;top:446px" width="6" height="8" viewBox="0 0 6 8"><defs><linearGradient id="la" x1="0" y1="0" x2="1" y2="0"><stop offset="0" stop-color="#202020"/><stop offset="1" stop-color="#707070"/></linearGradient></defs><path d="M5 0 L5 7.5 L0.6 3.6 Z" fill="url(#la)"/></svg>
<svg style="left:1007px;top:446px" width="6" height="8" viewBox="0 0 6 8"><defs><linearGradient id="ra" x1="0" y1="0" x2="1" y2="0"><stop offset="0" stop-color="#707070"/><stop offset="1" stop-color="#202020"/></linearGradient></defs><path d="M0 0 L0 7.5 L4.4 3.6 Z" fill="url(#ra)"/></svg>
<div style="left:28px;top:442px;width:965px;height:15px;border:1px solid #9a9a9a;border-radius:2px;background:linear-gradient(#f4f4f4 0%,#ececec 45%,#d9d9d9 55%,#cfcfcf 100%);box-shadow:inset 0 0 0 1px rgba(255,255,255,0.6);"></div>
<div style="left:506px;top:446px;width:2px;height:8px;background:linear-gradient(#222,#777);"></div>
<div style="left:509px;top:446px;width:2px;height:8px;background:linear-gradient(#222,#777);"></div>
<div style="left:512px;top:446px;width:2px;height:8px;background:linear-gradient(#222,#777);"></div>
<div style="left:460px;top:232px;width:1px;height:207px;background:#a0a0a0;"></div>
<div style="left:177px;top:438px;width:284px;height:1px;background:#a0a0a0;"></div>
<div style="left:461px;top:234px;width:1px;height:206px;background:#d2d2d2;"></div>
<div style="left:179px;top:439px;width:283px;height:1px;background:#d2d2d2;"></div>
<div style="left:175px;top:229px;width:285px;height:209px;background:#979797;"></div>
<div style="left:176px;top:230px;width:283px;height:207px;background:#ffffff;"></div>
<div style="left:177px;top:231px;width:281px;height:205px;background:#f0f0f0;"></div>
<div style="left:204px;top:231px;width:1px;height:205px;background:#e2e2e2;"></div>
<div style="left:205px;top:231px;width:1px;height:205px;background:#ffffff;"></div>
<span class="t" style="left:211px;top:236px;font-size:12px;color:#000;">Summary Customization</span>
<span class="t" style="left:377px;top:236px;font-size:12px;color:#000;">Ctrl+C</span>
<div style="left:206px;top:259px;width:252px;height:1px;background:#dcdcdc;"></div>
<div style="left:206px;top:260px;width:252px;height:1px;background:#ffffff;"></div>
<span class="t" style="left:211px;top:267px;font-size:12px;color:#000;">Toggle Header</span>
<span class="t" style="left:377px;top:267px;font-size:12px;color:#000;">Ctrl+H</span>
<div style="left:206px;top:290px;width:252px;height:1px;background:#dcdcdc;"></div>
<div style="left:206px;top:291px;width:252px;height:1px;background:#ffffff;"></div>
<span class="t" style="left:211px;top:298px;font-size:12px;color:#000;">Refresh Traders' blotters...</span>
<span class="t" style="left:377px;top:298px;font-size:12px;color:#000;">Ctrl+R</span>
<span class="t" style="left:211px;top:320px;font-size:12px;color:#000;">Flatten Selected</span>
<span class="t" style="left:377px;top:320px;font-size:12px;color:#000;">Ctrl+Shift+F</span>
<span class="t" style="left:211px;top:342px;font-size:12px;color:#000;">Export</span>
<span class="t" style="left:377px;top:342px;font-size:12px;color:#000;">Ctrl+E</span>
<div style="left:206px;top:365px;width:252px;height:1px;background:#dcdcdc;"></div>
<div style="left:206px;top:366px;width:252px;height:1px;background:#ffffff;"></div>
<span class="t" style="left:211px;top:373px;font-size:12px;color:#000;">Copy Cell to Clipboard</span>
<span class="t" style="left:211px;top:395px;font-size:12px;color:#000;">Copy Row to Clipboard</span>
<span class="t" style="left:211px;top:417px;font-size:12px;color:#000;">Copy Key to Clipboard</span>
</body></html>
